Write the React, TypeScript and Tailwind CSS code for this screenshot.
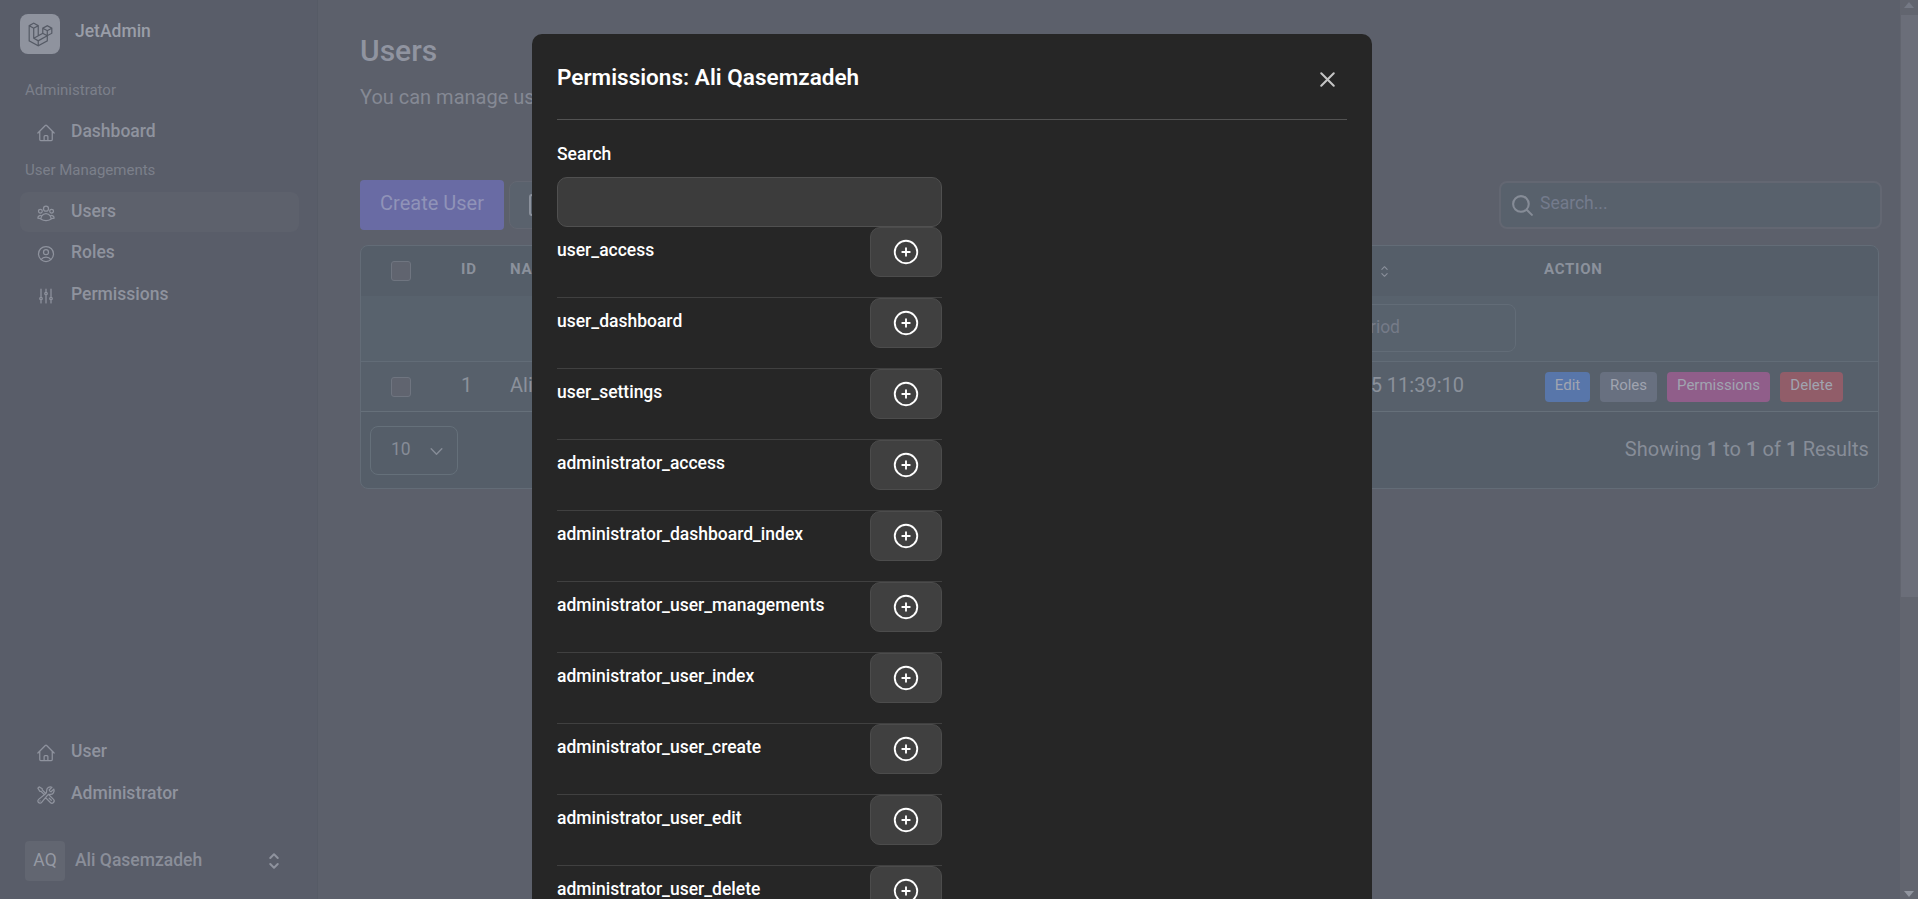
import React from "react";
import {
  HiOutlineHome,
  HiOutlineUserGroup,
  HiOutlineUserCircle,
  HiOutlineAdjustmentsVertical,
  HiOutlineWrenchScrewdriver,
  HiOutlinePlusCircle,
  HiOutlineXMark,
  HiOutlineMagnifyingGlass,
  HiOutlineChevronDown,
  HiOutlineChevronUpDown,
} from "react-icons/hi2";

const permissions = [
  "user_access",
  "user_dashboard",
  "user_settings",
  "administrator_access",
  "administrator_dashboard_index",
  "administrator_user_managements",
  "administrator_user_index",
  "administrator_user_create",
  "administrator_user_edit",
  "administrator_user_delete",
];

function Logo() {
  return (
    <svg viewBox="0 0 40 42" className="h-[25px] w-[25px] fill-[#555a65]">
      <path
        fillRule="evenodd"
        clipRule="evenodd"
        d="M17.2 5.63325L8.6 0.855469L0 5.63325V32.1434L16.2 41.1434L32.4 32.1434V23.699L40 19.4767V9.85547L31.4 5.07769L22.8 9.85547V18.2999L17.2 21.411V5.63325ZM38 18.2999L32.4 21.411V15.2545L38 12.1434V18.2999ZM36.9409 10.4439L31.4 13.5221L25.8591 10.4439L31.4 7.36561L36.9409 10.4439ZM24.8 18.2999V12.1434L30.4 15.2545V21.411L24.8 18.2999ZM23.8 20.0323L29.3409 23.1105L16.2 30.411L10.6591 27.3328L23.8 20.0323ZM7.6 27.9212L15.2 32.1434V38.2999L2 30.9666V7.92116L7.6 11.0323V27.9212ZM8.6 9.29991L3.05913 6.22165L8.6 3.14339L14.1409 6.22165L8.6 9.29991ZM30.4 24.8101L17.2 32.1434V38.2999L30.4 30.9666V24.8101ZM9.6 11.0323L15.2 7.92117V22.5221L9.6 25.6333V11.0323Z"
      />
    </svg>
  );
}

function NavItem({ icon, label, active }: { icon: React.ReactNode; label: string; active?: boolean }) {
  return (
    <div
      className={
        "flex h-10 items-center rounded-lg pl-4 text-[17.5px] font-medium text-[#8f939e] " +
        (active ? "bg-[#5d616c]" : "")
      }
    >
      <span className="mt-[1px] text-[20px]">{icon}</span>
      <span className="ml-[15px] -mt-[2px]">{label}</span>
    </div>
  );
}

function Sidebar() {
  return (
    <aside className="flex h-full w-[318px] shrink-0 flex-col border-r border-[#565b66] bg-[#595d69] pr-[18px] pl-5">
      <div className="flex pt-[14px]">
        <div className="flex size-10 items-center justify-center rounded-lg bg-[#8f939e]">
          <Logo />
        </div>
        <span className="ml-[15px] mt-1 text-[17.5px] font-medium text-[#9a9ea8]">JetAdmin</span>
      </div>
      <div className="mt-[25px] h-[22px] pl-[5px] text-[15px] leading-[22px] text-[#7c808b]">Administrator</div>
      <div className="mt-[11px]">
        <NavItem icon={<HiOutlineHome />} label="Dashboard" />
      </div>
      <div className="mt-[7px] h-[22px] pl-[5px] text-[15px] leading-[22px] text-[#7c808b]">User Managements</div>
      <div className="mt-[11px] flex flex-col gap-[1.5px]">
        <NavItem icon={<HiOutlineUserGroup />} label="Users" active />
        <NavItem icon={<HiOutlineUserCircle />} label="Roles" />
        <NavItem icon={<HiOutlineAdjustmentsVertical />} label="Permissions" />
      </div>
      <div className="mt-auto flex flex-col gap-[2px]">
        <NavItem icon={<HiOutlineHome />} label="User" />
        <NavItem icon={<HiOutlineWrenchScrewdriver />} label="Administrator" />
      </div>
      <div className="mt-[27px] mb-[18px] flex h-10 items-center pl-[5px]">
        <div className="flex size-10 items-center justify-center rounded bg-[#626671] text-[17.5px] text-[#9599a3]">
          <span className="-mt-px">AQ</span>
        </div>
        <span className="-mt-0.5 ml-[10px] text-[17.5px] font-medium text-[#8a8e99]">Ali Qasemzadeh</span>
        <HiOutlineChevronUpDown className="ml-auto mr-[13px] text-[24px] text-[#8f939e]" strokeWidth={2} />
      </div>
    </aside>
  );
}

function Checkbox() {
  return <div className="size-5 shrink-0 rounded-[3px] border border-[#6f7580] bg-[#60646f]" />;
}

function UsersTable() {
  return (
    <div className="mt-[15px] h-[244px] w-[1519px] overflow-hidden rounded-lg border border-[#636c77] bg-[#555e69]">
      <div className="flex h-[50px] items-center text-[15px] font-bold tracking-[0.75px] text-[#8b919c]">
        <div className="w-[100px] pl-[30px]"><Checkbox /></div>
        <div className="-mt-[3px] w-[49px]">ID</div>
        <div className="-mt-[3px] w-[866px]">NAME</div>
        <div className="w-[168px]">
          <HiOutlineChevronUpDown className="text-[17px]" />
        </div>
        <div className="-mt-[3px] w-[200px]">ACTION</div>
      </div>
      <div className="flex h-[66px] items-center border-b border-[#626c77] bg-[#58626d]">
        <div className="-mt-px ml-[770px] flex h-12 w-[385px] items-center justify-end rounded-lg border border-[#626c77] pr-[115px] pb-[2px] text-[17.5px] text-[#757b88]">
          Select a Period
        </div>
      </div>
      <div className="flex h-[50px] items-center border-b border-[#66707a] bg-[#57606b] text-[20px] text-[#8b919b]">
        <div className="w-[100px] pl-[30px]"><Checkbox /></div>
        <div className="-mt-[3px] w-[49px]">1</div>
        <div className="-mt-[3px] w-[650px]">Ali</div>
        <div className="-mt-[3px] w-[304px] text-right">2025-02-15 11:39:10</div>
        <div className="ml-[81px] flex gap-[10px] text-[15px] text-[#a0a4b0]">
          <span className="flex h-[30px] w-[45px] items-center justify-center rounded bg-[#5876aa] pb-[3px]">Edit</span>
          <span className="flex h-[30px] w-[57px] items-center justify-center rounded bg-[#687080] pb-[3px]">Roles</span>
          <span className="flex h-[30px] w-[103px] items-center justify-center rounded bg-[#905e8a] pb-[3px]">Permissions</span>
          <span className="flex h-[30px] w-[63px] items-center justify-center rounded bg-[#915d69] pb-[3px]">Delete</span>
        </div>
      </div>
      <div className="flex items-start justify-between pl-[9px] pr-[9px] pt-[14px]">
        <div className="flex h-[49px] w-[88px] items-center justify-between rounded-lg border border-[#65707a] pl-[20px] pr-[12px] text-[17.5px] text-[#868c97]">
          <span className="-mt-[2px]">10</span>
          <HiOutlineChevronDown className="mt-[2px] text-[17px]" strokeWidth={2} />
        </div>
        <div className="mt-[8px] text-[20px] leading-[30px] tracking-[0.05px] text-[#878d98]">
          Showing <b>1</b> to <b>1</b> of <b>1</b> Results
        </div>
      </div>
    </div>
  );
}

function Main() {
  return (
    <main className="flex min-w-0 flex-1 flex-col bg-[#5c606b] pl-[42px]">
      <h1 className="mt-[31px] text-[30px] leading-10 font-medium text-[#9094a0]">Users</h1>
      <p className="mt-[11px] text-[20px] leading-[30px] text-[#858994]">You can manage users</p>
      <div className="mt-[68px] flex h-[50px] items-start">
        <button className="h-[50px] w-[144px] rounded bg-[#696ba4] pb-1 text-[20px] text-[#9093b8]">Create User</button>
        <div className="ml-[5px] mt-[1px] flex h-12 w-[80px] items-center rounded-lg border border-[#636772] bg-[#5a626d] pl-[18px] text-[#8b919c]">
          <svg viewBox="0 0 24 24" className="size-[24px]" fill="none" stroke="currentColor" strokeWidth="2">
            <rect x="2" y="2" width="20" height="20" rx="2" />
          </svg>
        </div>
        <div className="ml-auto mr-[18px] mt-[1px] flex h-12 w-[383px] items-center rounded-lg border-2 border-[#636772] bg-[#58616c] pl-[9px] text-[17.5px] text-[#747b8c]">
          <HiOutlineMagnifyingGlass className="text-[25px] text-[#868c97]" strokeWidth={2} />
          <span className="-mt-1 ml-[5px]">Search...</span>
        </div>
      </div>
      <UsersTable />
    </main>
  );
}

function Scrollbar() {
  return (
    <div className="flex w-[18px] shrink-0 flex-col items-center bg-[#62656f]">
      <svg viewBox="0 0 10 6" className="mt-[2px] h-[6px] w-[10px] fill-[#757985]"><path d="M5 0L10 6H0z" /></svg>
      <div className="mt-[7px] h-[582px] w-[17px] bg-[#6b6e79]" />
      <svg viewBox="0 0 10 6" className="mt-auto mb-[2px] h-[6px] w-[10px] fill-[#9296a0]"><path d="M0 0H10L5 6z" /></svg>
    </div>
  );
}

function PermissionsModal() {
  return (
    <div className="absolute top-[34px] left-[532px] h-[900px] w-[840px] rounded-t-[10px] bg-[#262626] px-[25px] text-white">
      <div className="flex h-[86px] items-start justify-between border-b border-[#525252]">
        <h2 className="mt-[27px] text-[22.5px] leading-8 font-semibold tracking-[0.03px]">Permissions: Ali Qasemzadeh</h2>
        <HiOutlineXMark className="mt-[33px] mr-[7px] text-[25px] text-[#c4c4c4]" strokeWidth={2} />
      </div>
      <div className="w-[385px]">
        <label className="mt-[22px] block text-[17.5px] leading-[24px] font-medium">Search</label>
        <div className="mt-[11px] h-[50px] rounded-[10px] border border-[#505050] bg-[#3c3c3c]" />
        {permissions.map((name) => (
          <div key={name} className="flex h-[71px] items-start justify-between border-b border-[#404040]">
            <span className="mt-[11px] text-[17.5px] leading-[24px] font-medium">{name}</span>
            <button className="flex h-[50px] w-[72px] items-center justify-center rounded-[10px] border border-[#4c4c4c] bg-[#404040]">
              <HiOutlinePlusCircle className="text-[30px]" />
            </button>
          </div>
        ))}
      </div>
    </div>
  );
}

export default function App() {
  return (
    <div className="relative flex h-[899px] w-[1918px] overflow-hidden font-[Roboto,sans-serif]">
      <Sidebar />
      <Main />
      <Scrollbar />
      <PermissionsModal />
    </div>
  );
}
